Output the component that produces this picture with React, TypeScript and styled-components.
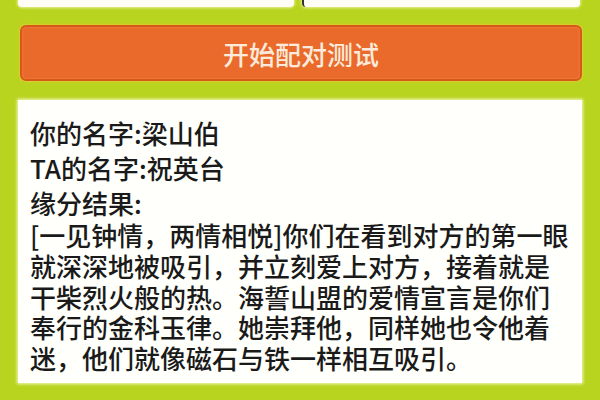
import styled, { createGlobalStyle } from "styled-components";

const GlobalStyle = createGlobalStyle`
	html, body {
		margin: 0;
		padding: 0;
		background: #b8d41e;
	}
	body {
		font-family: "Noto Sans CJK SC", "Noto Sans", sans-serif;
	}
`;

const Page = styled.div`
	width: 600px;
	height: 400px;
	overflow: hidden;
	padding: 0 18px;
	box-sizing: border-box;
	display: flex;
	flex-direction: column;
	background: #b8d41e;
`;

const InputRow = styled.div`
	display: flex;
	gap: 8px;
	height: 7px;
	padding-right: 2px;
`;

const Field = styled.div<{ $cursor?: boolean }>`
	flex: 1;
	height: 7px;
	background: #fffef6;
	border-radius: 0 0 4px 4px;
	box-shadow: 0 0 3px 1px rgba(250, 250, 180, 0.8);
	border-left: ${({ $cursor }) => ($cursor ? "2px solid #333" : "none")};
`;

const MatchButton = styled.button`
	margin-top: 18px;
	margin-left: 2px;
	height: 56px;
	border: 2px solid #d55a18;
	border-radius: 6px;
	background: #ea6a2b;
	box-shadow: 0 0 2px 1px rgba(240, 200, 60, 0.7), inset 0 0 2px rgba(255, 170, 110, 0.6);
	color: #fcebdc;
	font-family: "Noto Sans CJK SC", sans-serif;
	font-size: 26px;
	font-weight: 500;
	display: flex;
	align-items: center;
	justify-content: center;
	padding: 0;
`;

const ResultCard = styled.div`
	margin-top: 19px;
	height: 283px;
	background: #fffffb;
	box-shadow: 0 0 3px 1px rgba(255, 255, 210, 0.9);
	padding: 15px 12px 0;
	box-sizing: border-box;
	color: #1a1a1a;
	font-size: 26px;
	font-weight: 500;
`;

const InfoLine = styled.div`
	line-height: 35px;
	white-space: nowrap;
`;

const Paragraph = styled.div`
	margin-top: 0;
	line-height: 30.75px;
`;

const ParaLine = styled.div`
	white-space: nowrap;
`;

const resultLines = [
	"[一见钟情，两情相悦]你们在看到对方的第一眼",
	"就深深地被吸引，并立刻爱上对方，接着就是",
	"干柴烈火般的热。海誓山盟的爱情宣言是你们",
	"奉行的金科玉律。她崇拜他，同样她也令他着",
	"迷，他们就像磁石与铁一样相互吸引。",
];

export default function App() {
	return (
		<>
			<GlobalStyle />
			<Page>
				<InputRow>
					<Field />
					<Field $cursor />
				</InputRow>
				<MatchButton>开始配对测试</MatchButton>
				<ResultCard>
					<InfoLine>你的名字:梁山伯</InfoLine>
					<InfoLine>TA的名字:祝英台</InfoLine>
					<InfoLine>缘分结果:</InfoLine>
					<Paragraph>
						{resultLines.map((line) => (
							<ParaLine key={line}>{line}</ParaLine>
						))}
					</Paragraph>
				</ResultCard>
			</Page>
		</>
	);
}
